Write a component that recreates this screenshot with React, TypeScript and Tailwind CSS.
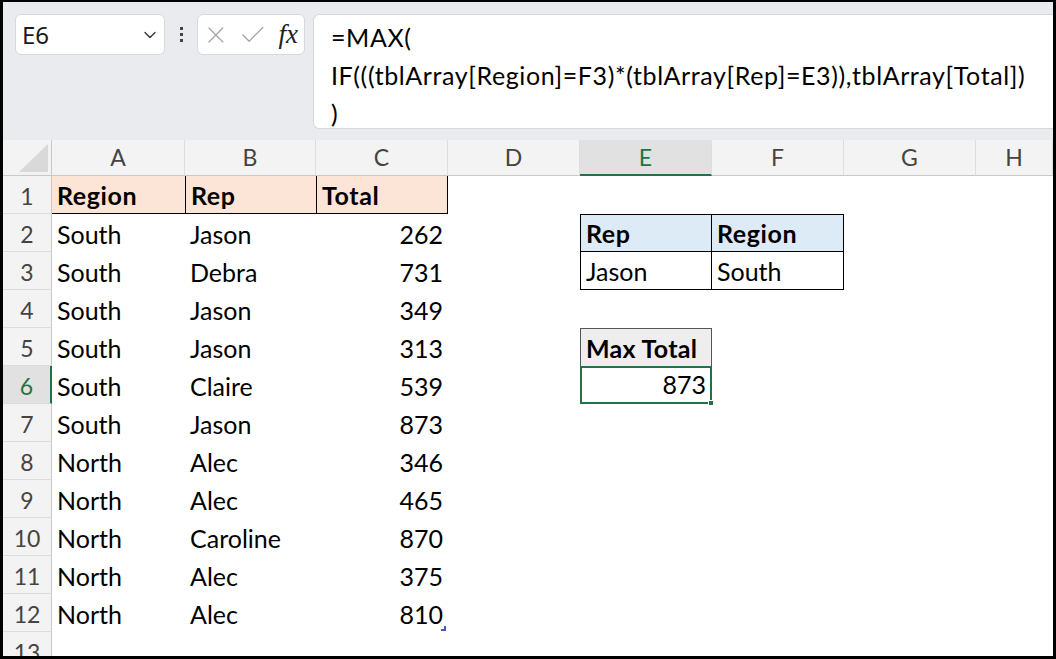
import { ChevronDown, X, Check } from "lucide-react";

const data: [string, string, number][] = [
  ["South", "Jason", 262],
  ["South", "Debra", 731],
  ["South", "Jason", 349],
  ["South", "Jason", 313],
  ["South", "Claire", 539],
  ["South", "Jason", 873],
  ["North", "Alec", 346],
  ["North", "Alec", 465],
  ["North", "Caroline", 870],
  ["North", "Alec", 375],
  ["North", "Alec", 810],
];

const cols = ["A", "B", "C", "D", "E", "F", "G", "H"];

const cellFont = { fontFamily: "Lato, 'Liberation Sans', sans-serif" };

function Cell({
  className = "",
  children,
}: {
  className?: string;
  children?: React.ReactNode;
}) {
  return (
    <div
      className={`relative flex items-end pb-[5px] px-[5px] text-[25px] leading-none text-black whitespace-nowrap ${className}`}
    >
      {children}
    </div>
  );
}

function RowHeader({ n, active }: { n: number; active?: boolean }) {
  return (
    <div
      className={`flex items-end justify-center pb-[5px] text-[23px] leading-none ${
        active
          ? "bg-[#e1e1e1] text-[#217346] border-r-2 border-r-[#217346]"
          : "bg-[#f3f3f3] text-[#444] border-r border-r-[#c8c8c8]"
      } border-b border-b-[#dcdcdc]`}
    >
      {n}
    </div>
  );
}

function renderRow(r: number) {
  // r is the sheet row number (1-based)
  const cells: React.ReactNode[] = [];
  cells.push(<RowHeader key="h" n={r} active={r === 6} />);

  if (r === 1) {
    cells.push(
      <Cell key="a" className="bg-[#fce4d6] font-bold tracking-[0.6px] border-b border-black">Region</Cell>,
      <Cell key="b" className="bg-[#fce4d6] font-bold tracking-[0.6px] border-b border-l border-black">Rep</Cell>,
      <Cell key="c" className="bg-[#fce4d6] font-bold tracking-[0.6px] border-b border-l border-r border-black">Total</Cell>
    );
  } else if (r >= 2 && r <= 12) {
    const [reg, rep, tot] = data[r - 2];
    cells.push(
      <Cell key="a">{reg}</Cell>,
      <Cell key="b">{rep}</Cell>,
      <Cell key="c" className="justify-end">
        {tot}
        {r === 12 && (
          <span className="absolute right-[2px] bottom-[1px] w-[5px] h-[5px] border-r-2 border-b-2 border-[#4759b8]" />
        )}
      </Cell>
    );
  } else {
    cells.push(<Cell key="a" />, <Cell key="b" />, <Cell key="c" />);
  }

  cells.push(<Cell key="d" />);

  if (r === 2) {
    cells.push(
      <Cell key="e" className="bg-[#ddebf7] font-bold tracking-[0.6px] border border-black">Rep</Cell>,
      <Cell key="f" className="bg-[#ddebf7] font-bold tracking-[0.6px] border-t border-r border-b border-black">Region</Cell>
    );
  } else if (r === 3) {
    cells.push(
      <Cell key="e" className="border-l border-r border-b border-black">Jason</Cell>,
      <Cell key="f" className="border-r border-b border-black">South</Cell>
    );
  } else if (r === 5) {
    cells.push(
      <Cell key="e" className="bg-[#eeeeee] font-bold tracking-[0.3px] border-t border-l border-r border-[#555]">Max Total</Cell>,
      <Cell key="f" />
    );
  } else if (r === 6) {
    cells.push(
      <Cell key="e" className="justify-end border-2 border-[#217346] pr-[4px]">
        873
        <span className="absolute -right-[4px] -bottom-[4px] w-[6px] h-[6px] bg-[#217346] border border-white" />
      </Cell>,
      <Cell key="f" />
    );
  } else {
    cells.push(<Cell key="e" />, <Cell key="f" />);
  }

  cells.push(<Cell key="g" />, <Cell key="h" />);
  return cells;
}

export default function App() {
  return (
    <div
      className="w-[1056px] h-[659px] overflow-hidden bg-white border-l-[3px] border-t-[2px] border-r-[3px] border-b-[3px] border-black flex flex-col"
      style={cellFont}
    >
      {/* formula bar */}
      <div className="h-[138px] shrink-0 bg-[#e9ebee] flex items-start pt-[12px] pl-[12px]">
        <div className="w-[150px] h-[41px] bg-white border border-[#d6d8db] rounded-[6px] flex items-center justify-between pl-[6px] pr-[4px]">
          <span
            className="text-[24px] text-[#1a1a1a]"
            style={{ fontFamily: "'Noto Sans', 'Open Sans', sans-serif" }}
          >
            E6
          </span>
          <ChevronDown size={20} strokeWidth={1.6} className="text-[#333]" />
        </div>
        <div className="w-[32px] h-[41px] flex flex-col items-center justify-center gap-[3px]">
          <span className="w-[3px] h-[3px] bg-[#444]" />
          <span className="w-[3px] h-[3px] bg-[#444]" />
          <span className="w-[3px] h-[3px] bg-[#444]" />
        </div>
        <div className="w-[108px] h-[41px] bg-white border border-[#d6d8db] rounded-[6px] flex items-center pl-[4px] pr-[6px] gap-[8px]">
          <X size={28} strokeWidth={1.1} className="text-[#a6a6a6]" />
          <Check size={30} strokeWidth={1.1} className="text-[#a6a6a6]" />
          <span
            className="text-[27px] italic text-[#222] ml-[3px]"
            style={{ fontFamily: "'Liberation Serif', 'DejaVu Serif', serif" }}
          >
            fx
          </span>
        </div>
        <div className="ml-[8px] flex-1 h-[115px] bg-white border border-r-0 border-[#d6d8db] rounded-l-[6px] pl-[17px] pt-[3px] text-[25px] tracking-[0.6px] leading-[38px] text-black whitespace-nowrap">
          <div>=MAX(</div>
          <div>IF(((tblArray[Region]=F3)*(tblArray[Rep]=E3)),tblArray[Total])</div>
          <div>)</div>
        </div>
      </div>

      {/* sheet */}
      <div className="grid grid-cols-[49px_133px_131px_132px_132px_132px_132px_132px_1fr] grid-rows-[36px_repeat(13,38px)]">
        <div className="bg-[#f3f3f3] border-r border-b border-[#c8c8c8] flex items-end justify-end pr-[3px] pb-[3px]">
          <svg width="29" height="28" viewBox="0 0 29 28">
            <polygon points="29,0 29,28 0,28" fill="#d9d9d9" />
          </svg>
        </div>
        {cols.map((c) => (
          <div
            key={c}
            className={`flex items-center justify-center text-[23px] leading-none ${
              c === "E"
                ? "bg-[#e1e1e1] text-[#217346] border-b-2 border-b-[#217346]"
                : "bg-[#f3f3f3] text-[#444] border-b border-b-[#c8c8c8]"
            } border-r border-r-[#dedede]`}
          >
            {c}
          </div>
        ))}
        {Array.from({ length: 13 }, (_, i) => renderRow(i + 1))}
      </div>
    </div>
  );
}
